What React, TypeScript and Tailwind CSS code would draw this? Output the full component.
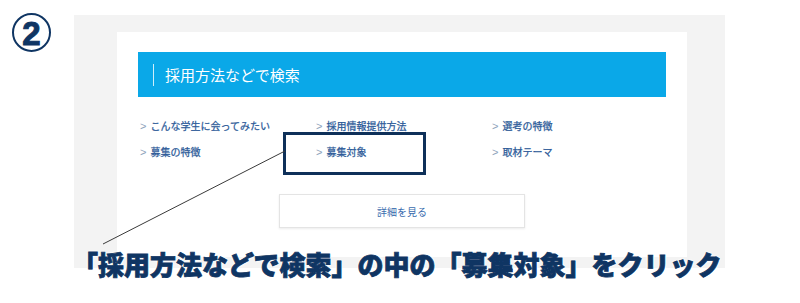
import React from "react";

const links = [
  "こんな学生に会ってみたい",
  "採用情報提供方法",
  "選考の特徴",
  "募集の特徴",
  "募集対象",
  "取材テーマ",
];

export default function App() {
  return (
    <div className="relative w-[800px] h-[303px] bg-white overflow-hidden font-['Noto_Sans_CJK_JP','Noto_Sans',sans-serif]">
      <div className="flex items-start pt-[13px] pl-[12px]">
        <div className="w-[39px] h-[39px] rounded-full border-[2px] border-[#0f3563] flex items-center justify-center shrink-0">
          <span className="text-[33px] leading-none font-black text-[#0f3563] font-['Liberation_Sans',sans-serif] mt-[1px] [-webkit-text-stroke:1px_#0f3563]">2</span>
        </div>
        <div className="ml-[23px] mt-[2px] w-[651px] h-[253px] bg-[#f3f3f3] pt-[17px] pl-[43px]">
          <div className="w-[570px] h-[225px] bg-white pt-[20px] px-[21px] flex flex-col">
            <div className="h-[45px] bg-[#0aa8e8] flex items-center pl-[15px]">
              <div className="w-px h-[22px] bg-white/80" />
              <span className="ml-[11px] text-[15px] text-white leading-none">採用方法などで検索</span>
            </div>
            <div className="mt-[16px] grid grid-cols-3">
              {links.map((l) => (
                <div key={l} className="h-[26px] flex items-center pl-[2px] text-[10px] leading-none">
                  <span className="text-[#8ea2bb] mr-[4px] text-[11px] font-['Liberation_Sans',sans-serif]">&gt;</span>
                  <span className="text-[#2c5a98] [-webkit-text-stroke:0.25px_#2c5a98]">{l}</span>
                </div>
              ))}
            </div>
            <div className="mt-[29px] self-center w-[246px] h-[34px] border border-[#e4e4e4] shadow-[0_1px_2px_rgba(0,0,0,0.08)] flex items-center justify-center">
              <span className="text-[10px] text-[#3a6cae]">詳細を見る</span>
            </div>
          </div>
        </div>
      </div>

      <div className="absolute left-[283px] top-[132px] w-[143px] h-[43px] border-[3px] border-[#0e3059]" />

      <svg className="absolute left-0 top-0" width="800" height="303">
        <line x1="103" y1="244" x2="285" y2="151" stroke="#3a3a3a" strokeWidth="1" />
      </svg>

      <div className="absolute left-[72px] top-[249px] text-[26px] leading-[30px] font-black text-[#0f3563] whitespace-nowrap [-webkit-text-stroke:0.8px_#0f3563] [text-shadow:0_0_3px_#fff,0_0_3px_#fff,0_0_3px_#fff]">
        「採用方法などで検索」の中の「募集対象」をクリック
      </div>
    </div>
  );
}
